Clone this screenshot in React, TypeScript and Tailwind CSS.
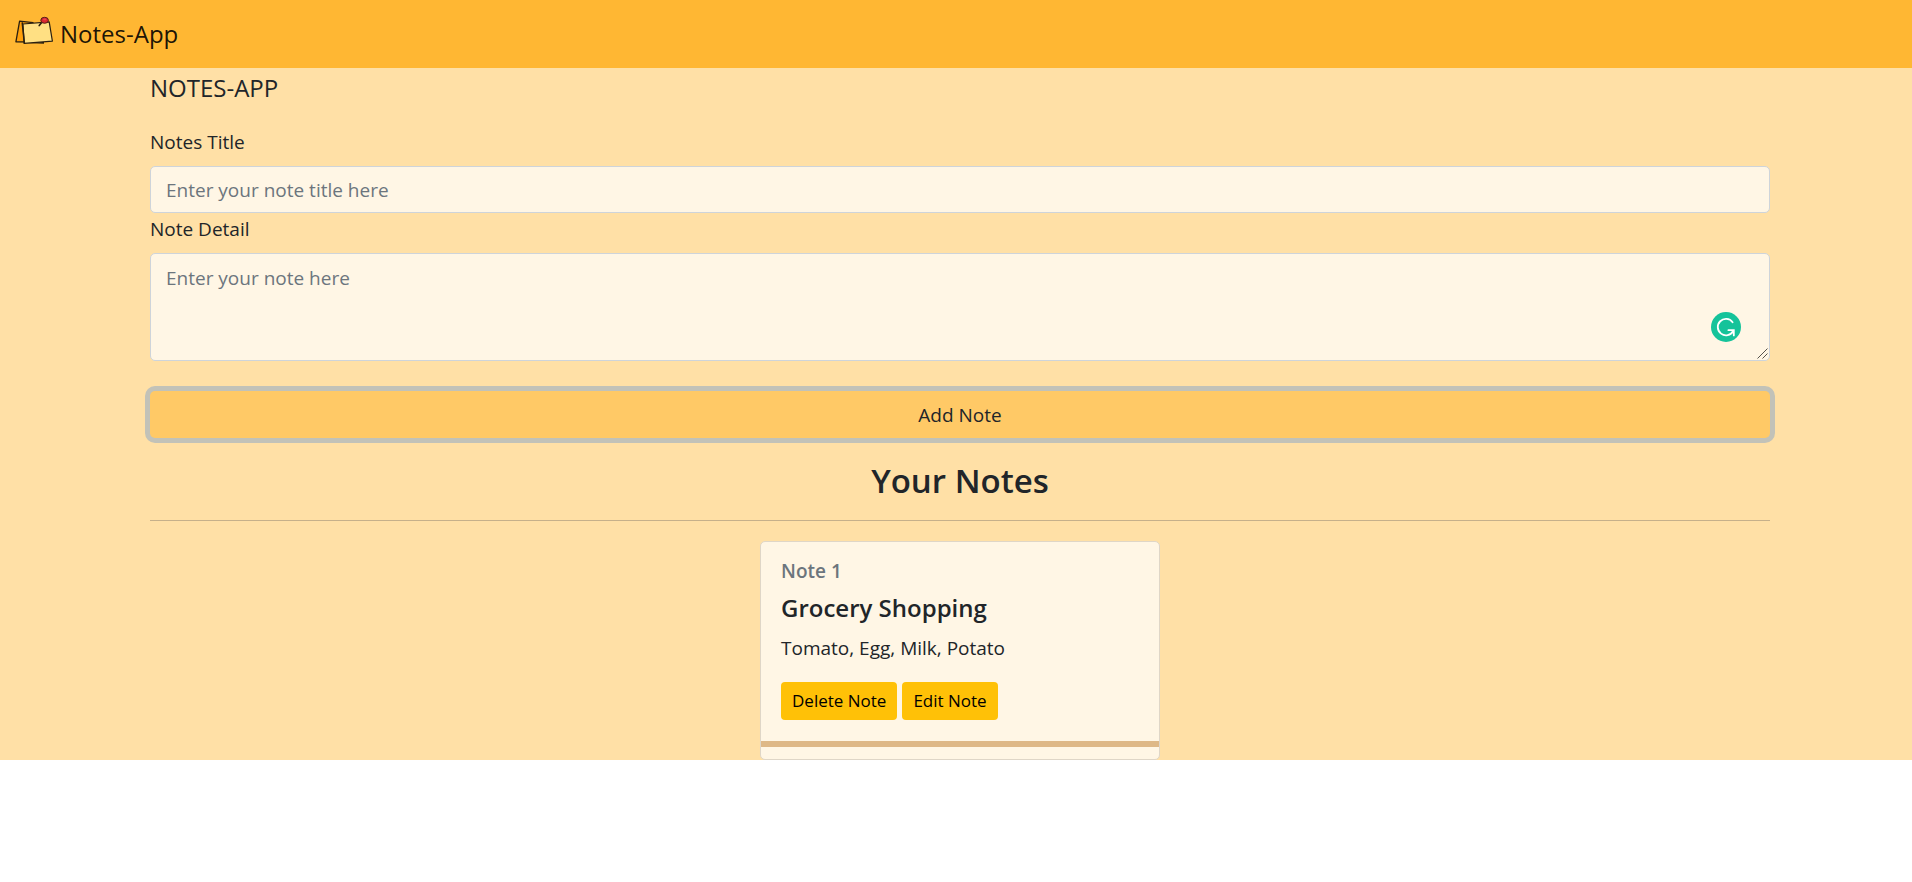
import React from "react";

function NotesLogo() {
  return (
    <svg className="h-9 w-10 shrink-0" viewBox="0 0 40 36" aria-hidden="true">
      <path d="M4.6 5.2 L18 6.6 L24 26 L0.9 25.8 Z" fill="#ff9f0a" stroke="#2b2010" strokeWidth="1.3" strokeLinejoin="round" />
      <path d="M10 27 L29 27.8 L29 25 L10 25 Z" fill="#2b2010" />
      <path d="M7.9 8 L34.2 5.8 L37.4 25.2 L9.2 27.4 Z" fill="#ffe083" stroke="#2b2010" strokeWidth="1.2" strokeLinejoin="round" />
      <path d="M7.2 6.4 L9.4 27.4" stroke="#2b2010" strokeWidth="1.5" />
      <path d="M24.2 9.6 L27.5 5.6" stroke="#2b2010" strokeWidth="1.6" strokeLinecap="round" />
      <ellipse cx="29.6" cy="4.3" rx="3.8" ry="3" fill="#d8262f" stroke="#52201a" strokeWidth="1" />
      <ellipse cx="29.8" cy="3.4" rx="1.7" ry="0.9" fill="#f0484e" />
    </svg>
  );
}

function GrammarBadge() {
  return (
    <svg className="pointer-events-none absolute right-[29px] bottom-[19px] h-[30px] w-[30px]" viewBox="0 0 30 30" aria-hidden="true">
      <circle cx="15" cy="15" r="15" fill="#15c39a" />
      <path d="M21.6 10.2 A8.2 8.2 0 1 0 22.2 19" fill="none" stroke="#fff" strokeWidth="1.8" strokeLinecap="round" />
      <path d="M17.4 18.2 H22.8 V23.4" fill="none" stroke="#fff" strokeWidth="1.8" strokeLinecap="round" />
    </svg>
  );
}

function ResizeGrip() {
  return (
    <svg className="pointer-events-none absolute right-[2px] bottom-[2px] h-[11px] w-[11px]" viewBox="0 0 11 11" aria-hidden="true">
      <path d="M0.5 10.5 L10.5 0.5 M5.5 10.5 L10.5 5.5" stroke="#55524c" strokeWidth="1" />
    </svg>
  );
}

const fieldClass =
  "block w-full rounded-[5px] border border-[#ced4da] bg-[#fff6e5] px-[15px] text-[19px] leading-[30px] text-[#212529] outline-none placeholder:text-[#6c757d] placeholder:opacity-100";
const smallButton =
  "h-[38px] rounded bg-[#ffc107] px-[11px] text-[17px] leading-[26px] text-black";

export default function App() {
  return (
    <div className="min-h-screen bg-white font-['Open_Sans',sans-serif] text-[19px] leading-[30px] text-[#212529]">
      <nav className="flex h-[68px] items-center bg-[#ffb733] px-[15px]">
        <a href="#" className="flex items-center gap-[5px] text-2xl text-black/90">
          <NotesLogo />
          <span>Notes-App</span>
        </a>
      </nav>
      <main className="bg-[#ffe0a6] pr-[142px] pl-[150px]">
        <h1 className="mb-[18px] text-2xl leading-[40px]">NOTES-APP</h1>
        <form onSubmit={(e) => e.preventDefault()}>
          <label htmlFor="title" className="mb-2 block leading-[32px]">Notes Title</label>
          <input id="title" type="text" placeholder="Enter your note title here" className={`${fieldClass} h-[47px]`} />
          <label htmlFor="detail" className="mb-2 block leading-[32px]">Note Detail</label>
          <div className="relative">
            <textarea id="detail" placeholder="Enter your note here" className={`${fieldClass} h-[108px] resize-none py-[9px]`} />
            <GrammarBadge />
            <ResizeGrip />
          </div>
          <button type="submit" className="mt-[30px] block h-[47px] w-full rounded-[5px] bg-[#ffc966] ring-[5px] ring-[#c2c2b8]">
            Add Note
          </button>
        </form>
        <h2 className="mt-[23px] text-center text-[33px] leading-[40px] font-semibold">Your Notes</h2>
        <hr className="mt-[19px] mb-5 border-t border-[#c6b08a]" />
        <article className="mx-auto w-[400px] rounded-[5px] border border-[#dfd6c7] bg-[#fff6e5] pb-3">
          <div className="px-5 pt-5 pb-[21px]">
            <h3 className="leading-[18px] font-semibold text-[#6c757d]">Note 1</h3>
            <h4 className="mt-[13px] text-2xl leading-[30px] font-semibold">Grocery Shopping</h4>
            <p className="mt-[10px]">Tomato, Egg, Milk, Potato</p>
            <div className="mt-[19px] flex gap-[5px]">
              <button type="button" className={smallButton}>Delete Note</button>
              <button type="button" className={smallButton}>Edit Note</button>
            </div>
          </div>
          <div className="h-[6px] bg-[#deb887]" />
        </article>
      </main>
    </div>
  );
}
